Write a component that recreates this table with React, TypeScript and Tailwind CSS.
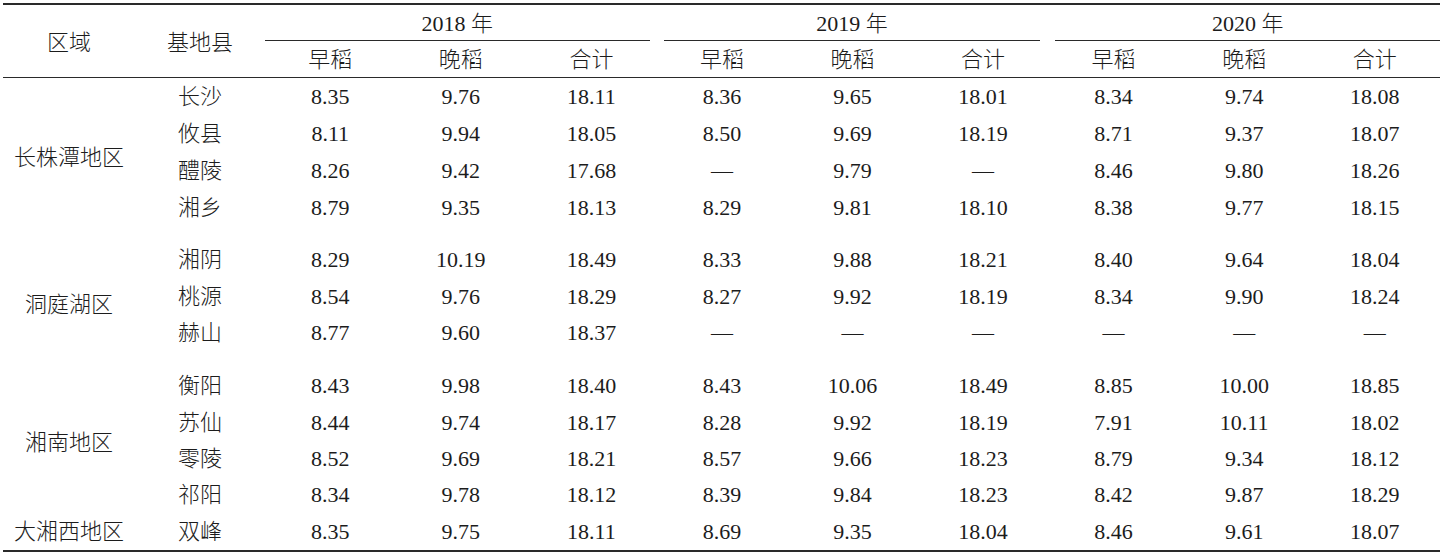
import React from "react";

type Row = { county: string; v: string[] };

const g1: Row[] = [
  { county: "长沙", v: ["8.35", "9.76", "18.11", "8.36", "9.65", "18.01", "8.34", "9.74", "18.08"] },
  { county: "攸县", v: ["8.11", "9.94", "18.05", "8.50", "9.69", "18.19", "8.71", "9.37", "18.07"] },
  { county: "醴陵", v: ["8.26", "9.42", "17.68", "—", "9.79", "—", "8.46", "9.80", "18.26"] },
  { county: "湘乡", v: ["8.79", "9.35", "18.13", "8.29", "9.81", "18.10", "8.38", "9.77", "18.15"] },
];
const g2: Row[] = [
  { county: "湘阴", v: ["8.29", "10.19", "18.49", "8.33", "9.88", "18.21", "8.40", "9.64", "18.04"] },
  { county: "桃源", v: ["8.54", "9.76", "18.29", "8.27", "9.92", "18.19", "8.34", "9.90", "18.24"] },
  { county: "赫山", v: ["8.77", "9.60", "18.37", "—", "—", "—", "—", "—", "—"] },
];
const g3: Row[] = [
  { county: "衡阳", v: ["8.43", "9.98", "18.40", "8.43", "10.06", "18.49", "8.85", "10.00", "18.85"] },
  { county: "苏仙", v: ["8.44", "9.74", "18.17", "8.28", "9.92", "18.19", "7.91", "10.11", "18.02"] },
  { county: "零陵", v: ["8.52", "9.69", "18.21", "8.57", "9.66", "18.23", "8.79", "9.34", "18.12"] },
  { county: "祁阳", v: ["8.34", "9.78", "18.12", "8.39", "9.84", "18.23", "8.42", "9.87", "18.29"] },
];
const g4: Row[] = [
  { county: "双峰", v: ["8.35", "9.75", "18.11", "8.69", "9.35", "18.04", "8.46", "9.61", "18.07"] },
];

function DataRow({ r, h }: { r: Row; h: string }) {
  return (
    <div className={`grid grid-cols-[130px_repeat(9,minmax(0,1fr))] ${h}`}>
      <div className="flex items-center justify-center">{r.county}</div>
      {r.v.map((x, i) => (
        <div key={i} className="flex items-center justify-center">
          {x}
        </div>
      ))}
    </div>
  );
}

export default function App() {
  return (
    <div
      className="w-[1440px] h-[552px] bg-white pt-[3px] pl-[3px] text-[22px] font-light leading-none text-[#1c1c1c] overflow-hidden"
      style={{ fontFamily: '"Liberation Serif", "Noto Sans CJK SC", serif' }}
    >
      <div className="border-t-2 border-b-[3px] border-[#2a2a2a]">
        {/* header */}
        <div className="grid grid-cols-[132px_130px_repeat(9,minmax(0,1fr))] grid-rows-[36px_36px] border-b border-[#2a2a2a]">
          <div className="row-span-2 flex items-center justify-center pt-[3px]">区域</div>
          <div className="row-span-2 flex items-center justify-center pt-[3px]">基地县</div>
          <div className="col-span-3 mr-[7px] border-b border-[#2a2a2a] flex items-center justify-center pt-[3px]">2018 年</div>
          <div className="col-span-3 ml-[7px] mr-[8px] border-b border-[#2a2a2a] flex items-center justify-center pt-[3px]">2019 年</div>
          <div className="col-span-3 ml-[7px] border-b border-[#2a2a2a] flex items-center justify-center pt-[3px]">2020 年</div>
          {["早稻", "晚稻", "合计", "早稻", "晚稻", "合计", "早稻", "晚稻", "合计"].map((t, i) => (
            <div key={i} className="flex items-center justify-center pt-[1px]">
              {t}
            </div>
          ))}
        </div>

        {/* group 1 */}
        <div className="flex">
          <div className="w-[132px] flex items-center justify-center pt-[12px]">长株潭地区</div>
          <div className="flex-1 flex flex-col">
            {g1.map((r) => (
              <DataRow key={r.county} r={r} h="h-[37px]" />
            ))}
          </div>
        </div>

        {/* group 2 */}
        <div className="flex mt-[16px]">
          <div className="w-[132px] flex items-center justify-center pt-[16px]">洞庭湖区</div>
          <div className="flex-1 flex flex-col">
            {g2.map((r) => (
              <DataRow key={r.county} r={r} h="h-[36.5px]" />
            ))}
          </div>
        </div>

        {/* group 3 */}
        <div className="flex mt-[16.5px]">
          <div className="w-[132px] flex flex-col">
            <div className="h-[145.6px] flex items-center justify-center pt-[4px]">湘南地区</div>
            <div className="h-[36.4px] flex items-center justify-center">大湘西地区</div>
          </div>
          <div className="flex-1 flex flex-col">
            {g3.concat(g4).map((r) => (
              <DataRow key={r.county} r={r} h="h-[36.4px]" />
            ))}
          </div>
        </div>
      </div>
    </div>
  );
}
